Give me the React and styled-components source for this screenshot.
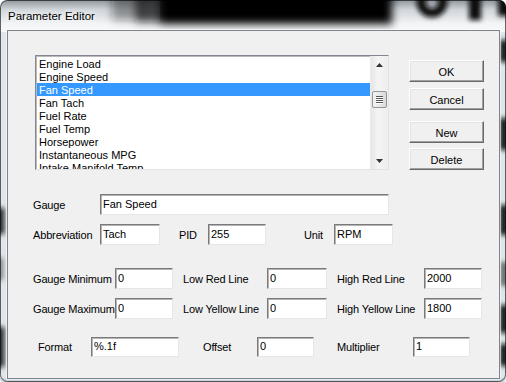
import React from 'react';
import styled, { createGlobalStyle } from 'styled-components';

const GlobalStyle = createGlobalStyle`
  html, body {
    margin: 0;
    padding: 0;
    background: #ffffff;
  }
  body {
    font-family: "Liberation Sans", Arial, sans-serif;
    font-size: 11px;
    color: #000;
  }
`;

const Window = styled.div`
  position: relative;
  width: 506px;
  height: 382px;
  box-sizing: border-box;
  display: flex;
  flex-direction: column;
  padding: 0 6px 3px 7px;
  overflow: hidden;
  border-radius: 7px 7px 4px 4px;
`;

const Glass = styled.svg`
  position: absolute;
  left: 0;
  top: 0;
  width: 506px;
  height: 382px;
  z-index: 0;
`;

const TitleBar = styled.div`
  position: relative;
  z-index: 1;
  height: 30px;
  display: flex;
  align-items: center;
  padding: 2px 0 0 1px;
  box-sizing: border-box;
  font-size: 11.5px;
  color: #000;
`;

const TitleText = styled.span`
  text-shadow: 0 0 5px #fff, 0 0 9px #fff;
`;

const Client = styled.div`
  position: relative;
  z-index: 1;
  flex: 1;
  background: #f0f0f0;
  border: 1px solid #7d848b;
  box-shadow: 0 0 0 1px rgba(255, 255, 255, 0.55);
`;

const Top = styled.div`
  display: flex;
  padding: 24px 0 0 27px;
`;

const ListBox = styled.div`
  width: 354px;
  height: 115px;
  box-sizing: border-box;
  display: flex;
  background: #fff;
  border-top: 1px solid #828790;
  border-left: 1px solid #828790;
  border-right: 1px solid #e3e3e3;
  border-bottom: 1px solid #e3e3e3;
  box-shadow: inset 1px 1px 0 #b9b9b9;
`;

const Items = styled.div`
  flex: 1;
  overflow: hidden;
  padding: 1px 0 0 1px;
`;

const Item = styled.div`
  height: 13px;
  line-height: 14px;
  padding-left: 2px;
  white-space: nowrap;
  background: ${({ $selected }) => ($selected ? '#3399ff' : 'transparent')};
  color: ${({ $selected }) => ($selected ? '#fff' : '#000')};
`;

const ScrollBar = styled.div`
  width: 17px;
  display: flex;
  flex-direction: column;
  align-items: center;
  background: linear-gradient(to right, #e6e6e6, #f4f4f4 40%, #eeeeee);
  border-left: 1px solid #ececec;
`;

const Arrow = styled.div`
  width: 17px;
  height: 17px;
  display: flex;
  align-items: center;
  justify-content: center;
`;

const Track = styled.div`
  flex: 1;
  padding-top: 18px;
`;

const Thumb = styled.div`
  width: 15px;
  height: 17px;
  box-sizing: border-box;
  border: 1px solid #959595;
  border-radius: 2px;
  background: linear-gradient(to right, #f3f3f3, #e8e8e8 50%, #d9d9d9);
  display: flex;
  flex-direction: column;
  align-items: center;
  justify-content: center;
  gap: 1px;
`;

const Grip = styled.span`
  display: block;
  width: 7px;
  height: 1px;
  background: #555;
  box-shadow: 0 1px 0 #fff;
`;

const ButtonCol = styled.div`
  display: flex;
  flex-direction: column;
  margin-left: 20px;
  padding-top: 5px;
`;

const Button = styled.button`
  width: 75px;
  height: 22px;
  margin-top: ${({ $gap }) => $gap || 0}px;
  padding: 1px 0 0;
  box-sizing: border-box;
  font-family: "Liberation Sans", Arial, sans-serif;
  font-size: 11px;
  color: #000;
  background: #f0f0f0;
  border-top: 1px solid #ffffff;
  border-left: 1px solid #ffffff;
  border-right: 1px solid #696969;
  border-bottom: 1px solid #696969;
  box-shadow: inset -1px -1px 0 #a0a0a0, inset 1px 1px 0 #e3e3e3;
  border-radius: 0;
`;

const Form = styled.div`
  display: flex;
  flex-direction: column;
  padding: 24px 0 0 25px;
`;

const Row = styled.div`
  display: flex;
  align-items: center;
  margin-top: ${({ $gap }) => $gap || 0}px;
  height: ${({ $h }) => $h || 21}px;
`;

const Label = styled.span`
  width: ${({ $w }) => $w}px;
  padding-left: ${({ $pad }) => $pad || 0}px;
  box-sizing: border-box;
  white-space: nowrap;
  letter-spacing: -0.15px;
`;

const Field = styled.input`
  width: ${({ $w }) => $w}px;
  height: 100%;
  box-sizing: border-box;
  margin: 0;
  padding: 0 2px 2px;
  font-family: "Liberation Sans", Arial, sans-serif;
  font-size: 11px;
  color: #000;
  background: #fff;
  outline: none;
  border-top: 1px solid #7a7a7a;
  border-left: 1px solid #7a7a7a;
  border-right: 1px solid #e6e6e6;
  border-bottom: 1px solid #e6e6e6;
  box-shadow: inset 1px 1px 0 #b4b4b4;
  border-radius: 0;
`;

const params = [
  'Engine Load',
  'Engine Speed',
  'Fan Speed',
  'Fan Tach',
  'Fuel Rate',
  'Fuel Temp',
  'Horsepower',
  'Instantaneous MPG',
  'Intake Manifold Temp',
];

const GlassBackdrop = () => (
  <Glass width="506" height="382" viewBox="0 0 506 382">
    <defs>
      <linearGradient id="pe-top" x1="0" y1="0" x2="0" y2="1">
        <stop offset="0" stopColor="#8f969c" />
        <stop offset="0.3" stopColor="#cfd5da" />
        <stop offset="0.75" stopColor="#f3f5f6" />
        <stop offset="1" stopColor="#f7f8f9" />
      </linearGradient>
      <filter id="pe-blur" filterUnits="userSpaceOnUse" x="-20" y="-20" width="546" height="422">
        <feGaussianBlur stdDeviation="2.5" />
      </filter>
      <filter id="pe-blur-big" filterUnits="userSpaceOnUse" x="-20" y="-20" width="546" height="80">
        <feGaussianBlur stdDeviation="4" />
      </filter>
    </defs>
    <rect width="506" height="382" fill="#dfe5ea" />
    <rect width="506" height="32" fill="url(#pe-top)" />
    <g filter="url(#pe-blur-big)">
      <rect x="112" y="-10" width="30" height="30" fill="#111" fillOpacity="0.4" />
      <rect x="136" y="-10" width="30" height="32" fill="#111" fillOpacity="0.75" />
      <rect x="160" y="-10" width="232" height="34" fill="#050505" />
    </g>
    <g filter="url(#pe-blur)">
      <circle cx="432" cy="2" r="11" fill="none" stroke="#111" strokeWidth="9" />
      <rect x="469" y="-6" width="12" height="26" fill="#111" />
      <rect x="498" y="-6" width="12" height="22" fill="#111" />
      <rect x="500" y="40" width="8" height="22" fill="#111" />
      <rect x="500" y="118" width="8" height="32" fill="#111" />
      <rect x="500" y="205" width="8" height="30" fill="#111" />
      <rect x="501" y="262" width="6" height="24" fill="#555" />
      <rect x="500" y="305" width="8" height="28" fill="#111" />
      <rect x="500" y="344" width="8" height="22" fill="#111" />
      <rect x="-2" y="208" width="6" height="26" fill="#111" />
      <rect x="-2" y="258" width="5" height="22" fill="#777" />
      <rect x="-2" y="327" width="6" height="40" fill="#111" />
    </g>
    <rect x="0" y="378" width="506" height="4" fill="#c9d4de" />
    <rect x="0.5" y="0.5" width="505" height="381" rx="7" fill="none" stroke="rgba(0,0,0,0.6)" />
  </Glass>
);

export default function App() {
  return (
    <>
      <GlobalStyle />
      <Window>
        <GlassBackdrop />
        <TitleBar>
          <TitleText>Parameter Editor</TitleText>
        </TitleBar>
        <Client>
          <Top>
            <ListBox>
              <Items>
                {params.map((p) => (
                  <Item key={p} $selected={p === 'Fan Speed'}>{p}</Item>
                ))}
              </Items>
              <ScrollBar>
                <Arrow>
                  <svg width="7" height="4" viewBox="0 0 7 4"><path d="M0 4 L3.5 0 L7 4 Z" fill="#333" /></svg>
                </Arrow>
                <Track>
                  <Thumb>
                    <Grip />
                    <Grip />
                    <Grip />
                    <Grip />
                  </Thumb>
                </Track>
                <Arrow>
                  <svg width="7" height="4" viewBox="0 0 7 4"><path d="M0 0 L3.5 4 L7 0 Z" fill="#333" /></svg>
                </Arrow>
              </ScrollBar>
            </ListBox>
            <ButtonCol>
              <Button>OK</Button>
              <Button $gap={6}>Cancel</Button>
              <Button $gap={11}>New</Button>
              <Button $gap={5}>Delete</Button>
            </ButtonCol>
          </Top>
          <Form>
            <Row>
              <Label $w={67}>Gauge</Label>
              <Field $w={289} readOnly value="Fan Speed" />
            </Row>
            <Row $gap={9}>
              <Label $w={67}>Abbreviation</Label>
              <Field $w={60} readOnly value="Tach" />
              <Label $w={48} $pad={19}>PID</Label>
              <Field $w={58} readOnly value="255" />
              <Label $w={68} $pad={38}>Unit</Label>
              <Field $w={59} readOnly value="RPM" />
            </Row>
            <Row $gap={23}>
              <Label $w={82}>Gauge Minimum</Label>
              <Field $w={58} readOnly value="0" />
              <Label $w={94} $pad={10}>Low Red Line</Label>
              <Field $w={60} readOnly value="0" />
              <Label $w={97} $pad={10}>High Red Line</Label>
              <Field $w={58} readOnly value="2000" />
            </Row>
            <Row $gap={9}>
              <Label $w={82}>Gauge Maximum</Label>
              <Field $w={58} readOnly value="0" />
              <Label $w={94} $pad={10}>Low Yellow Line</Label>
              <Field $w={60} readOnly value="0" />
              <Label $w={97} $pad={10}>High Yellow Line</Label>
              <Field $w={58} readOnly value="1800" />
            </Row>
            <Row $gap={18} $h={20}>
              <Label $w={58} $pad={5}>Format</Label>
              <Field $w={88} readOnly value="%.1f" />
              <Label $w={78} $pad={24}>Offset</Label>
              <Field $w={57} readOnly value="0" />
              <Label $w={99} $pad={23}>Multiplier</Label>
              <Field $w={57} readOnly value="1" />
            </Row>
          </Form>
        </Client>
      </Window>
    </>
  );
}
